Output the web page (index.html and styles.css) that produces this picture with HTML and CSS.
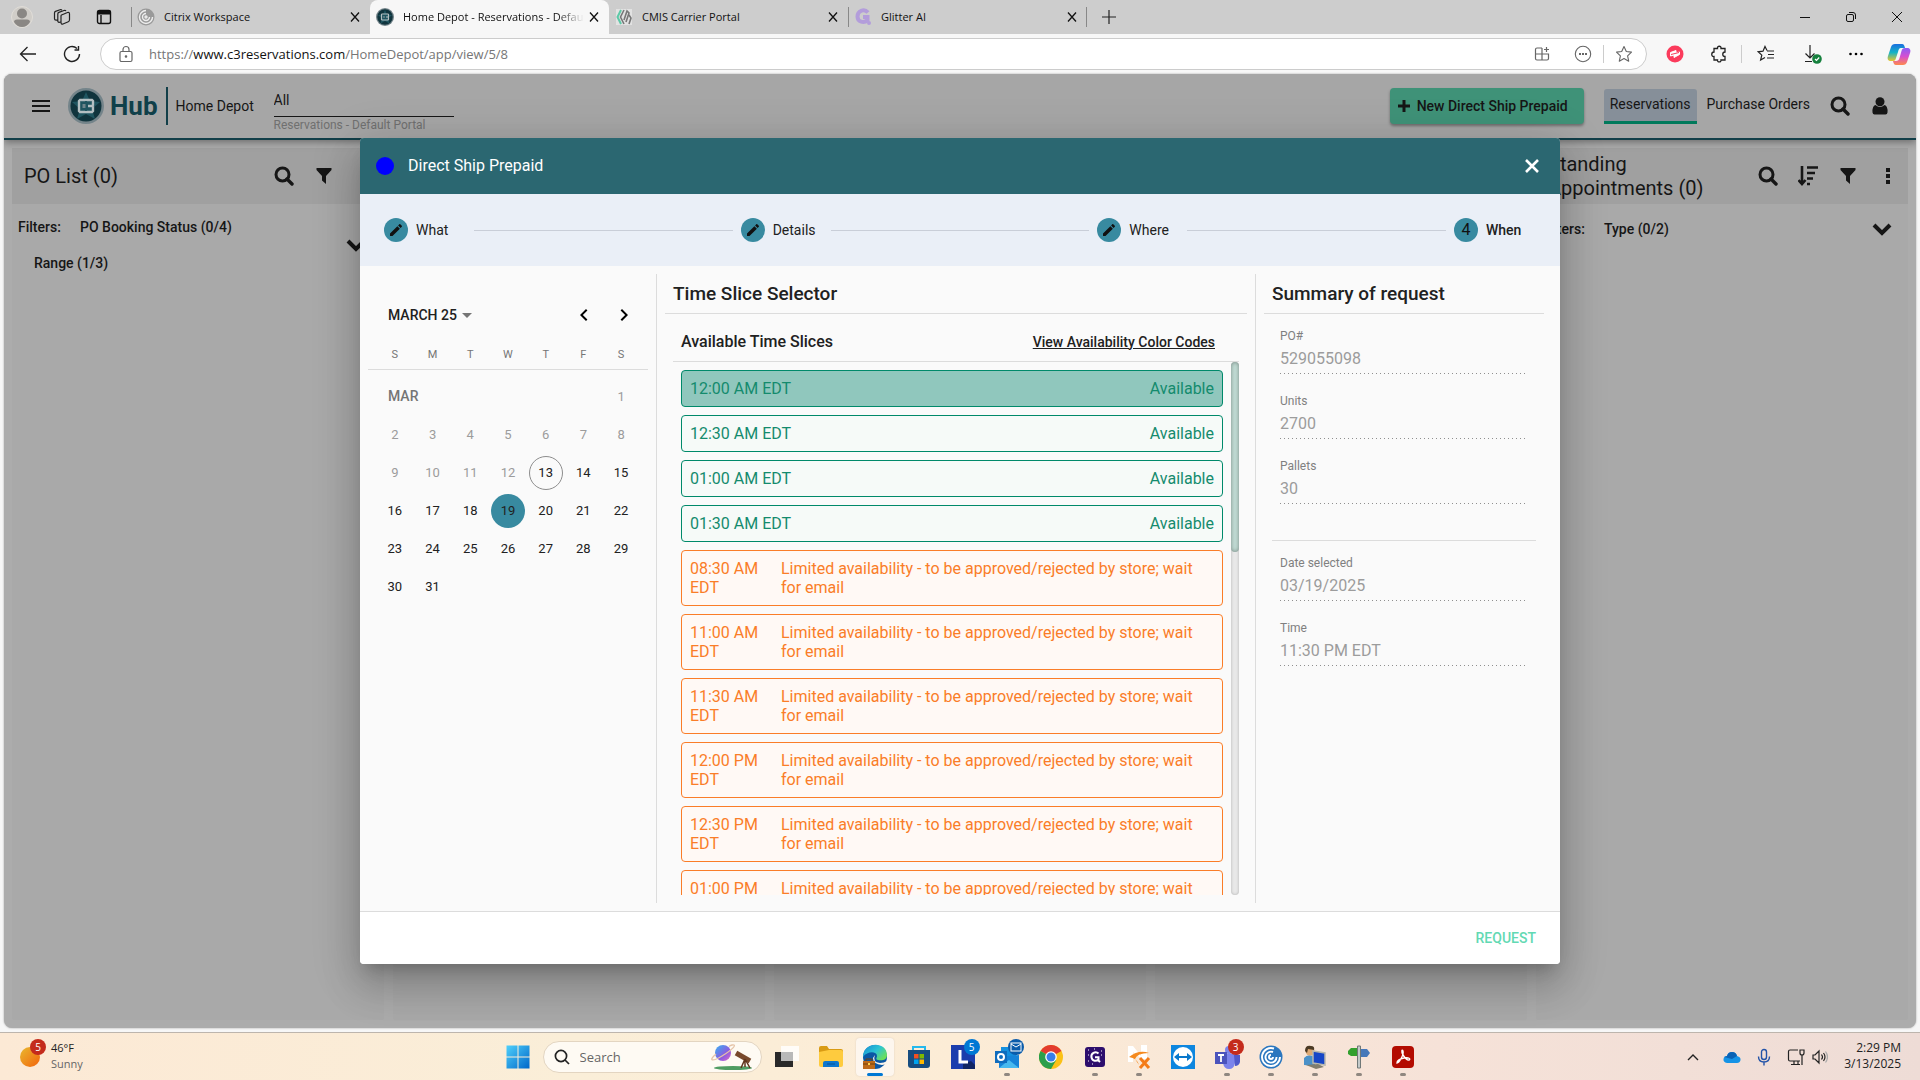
FILE: index.html
```html
<!DOCTYPE html>
<html lang="en">
<head>
<meta charset="utf-8">
<title>Home Depot - Reservations - Default Portal</title>
<link rel="stylesheet" href="styles.css">
</head>
<body>
<svg width="0" height="0" class="defs" aria-hidden="true">
  <symbol id="x" viewBox="0 0 12 12"><path d="M2 1.500l8 9M10 1.500l-8 9" fill="none" stroke="currentColor" stroke-width="1.300"/></symbol>
  <symbol id="search" viewBox="0 0 20 20"><circle cx="8.500" cy="8.500" r="6.500" fill="none" stroke="currentColor" stroke-width="3"/><path d="M13 13l5 5" stroke="currentColor" stroke-width="3.400" stroke-linecap="round"/></symbol>
  <symbol id="filter" viewBox="0 0 16 18"><path d="M.5 1h15v2L10 9v8l-4-3.500V9L.5 3z" fill="currentColor"/></symbol>
  <symbol id="down" viewBox="0 0 20 14"><path d="M2 3l8 8 8-8" fill="none" stroke="currentColor" stroke-width="4"/></symbol>
  <symbol id="pencil" viewBox="0 0 24 24"><path fill="currentColor" d="M3 17.250V21h3.750L17.810 9.940l-3.750-3.750L3 17.250zM20.710 7.040c.39-.39.39-1.020 0-1.410l-2.340-2.340c-.39-.39-1.020-.39-1.410 0l-1.830 1.830 3.750 3.750 1.830-1.830z"/></symbol>
  <symbol id="c3" viewBox="0 0 36 36"><circle cx="18" cy="18" r="18" fill="#74848a"/><circle cx="18" cy="18" r="15.500" fill="#10343d"/><path d="M18 4l4 9 10 1-8 7 3 10-9-5-9 5 3-10-8-7 10-1z" fill="#1f5560"/><path d="M17 13v-1h-5l-1 1v10l1 1h5v-1M19 13v-1h5l1 1v4l-1 1 1 1v4l-1 1h-5v-1M20 18h4" fill="none" stroke="#b4bfc2" stroke-width="2.400"/><path d="M14.500 16h3v4h-3z" fill="#6f868c"/></symbol>
</svg>

<header class="browser">
  <nav class="tabs" aria-label="Browser tabs">
    <div class="tab-tools">
      <svg width="22" height="22" viewBox="0 0 22 22"><circle cx="11" cy="11" r="10.500" fill="#d0cdc8" stroke="#e0ddd8"/><circle cx="11" cy="7.500" r="5" fill="#8a8784"/><path d="M3 16q0-2.500 3-2.500h10q3 0 3 2.500-3 5-8 5t-8-5z" fill="#8a8784"/></svg>
      <svg width="18" height="18" viewBox="0 0 18 18" fill="none" stroke="#222" stroke-width="1.200" stroke-linejoin="round"><path d="M8.500 7l6-2.500q1.800-.5 2 1.300v6q0 1.500-1.200 2L10 16q-1.800.6-2-1.200V8q0-.8.500-1z"/><path d="M8 14l-2 .3q-1.200 0-1.200-1.400V6q0-1.200 1-1.600L11 2.500q1.300-.5 2 .5M5 12l-2 .2q-1.500 0-1.500-1.400V5q0-1.200 1-1.600L7 1.700q1-.4 2 .3"/></svg>
      <svg width="16" height="16" viewBox="0 0 16 16" fill="none" stroke="#111" stroke-width="1.400"><rect x="1.500" y="1.500" width="13" height="13" rx="2"/><path d="M1.500 3.500h13" stroke-width="4"/><path d="M5 6v8"/></svg>
    </div>
    <div class="tab line-left"><svg width="18" height="18" viewBox="0 0 18 18" fill="none" stroke="#eee" stroke-width="1.400"><circle cx="9" cy="9" r="8.500" fill="#999" stroke="none"/><path d="M9 2.500a6.500 6.500 0 1 0 6.500 6.500M9 5.500A3.500 3.500 0 1 0 12.500 9M9 9"/><circle cx="9" cy="9" r="1"/></svg><span>Citrix Workspace</span><button aria-label="Close tab"><svg width="12" height="12"><use href="#x"/></svg></button></div>
    <div class="tab active"><svg width="18" height="18"><use href="#c3"/></svg><span>Home Depot - Reservations - Default Portal</span><button aria-label="Close tab"><svg width="12" height="12"><use href="#x"/></svg></button></div>
    <div class="tab"><svg width="18" height="18" viewBox="0 0 18 18" fill="none"><path fill="#e2e2e2" d="M1 1h16v16H1z"/><path d="M6 2L2.500 9 6 16" stroke="#5cc9a7" stroke-width="2"/><path d="M9 2L5.500 9 9 16M9 12l3-9 2 2-3 9M14 7l2 3-2 6" stroke="#777" stroke-width="1.600"/></svg><span>CMIS Carrier Portal</span><button aria-label="Close tab"><svg width="12" height="12"><use href="#x"/></svg></button></div>
    <div class="tab line-left line-right"><svg width="18" height="18" viewBox="0 0 18 18" fill="none" stroke="#b39ddb" stroke-width="4"><path d="M14 4.500C10 0 3.500 3 3.500 8.500S10 15.500 13.500 12V9H9"/><circle cx="15" cy="15" r="1" stroke-width="2"/></svg><span>Glitter AI</span><button aria-label="Close tab"><svg width="12" height="12"><use href="#x"/></svg></button></div>
    <button class="new-tab" aria-label="New tab"><svg width="16" height="16" viewBox="0 0 16 16" stroke="#222" stroke-width="1.200"><path d="M8 1v14M1 8h14"/></svg></button>
    <div class="window-controls">
      <button aria-label="Minimize"><svg width="12" height="12" viewBox="0 0 12 12" stroke="#111"><path d="M1 6.500h10"/></svg></button>
      <button aria-label="Restore"><svg width="12" height="12" viewBox="0 0 12 12" fill="none" stroke="#111"><rect x="1.500" y="3.500" width="7" height="7" rx="1.500"/><path d="M4 1.500h4q2.500 0 2.500 2.500v4"/></svg></button>
      <button aria-label="Close"><svg width="12" height="12" viewBox="0 0 12 12" stroke="#111"><path d="M1 1l10 10M11 1L1 11"/></svg></button>
    </div>
  </nav>
  <div class="toolbar">
    <button class="tool" aria-label="Back"><svg width="18" height="18" viewBox="0 0 18 18" fill="none" stroke="#222" stroke-width="1.300"><path d="M17 9H1.500M8.500 2l-7 7 7 7"/></svg></button>
    <button class="tool" aria-label="Refresh"><svg width="18" height="18" viewBox="0 0 18 18" fill="none" stroke="#222" stroke-width="1.400"><path d="M16.500 9a7.500 7.500 0 1 1-2.500-5.600M15.500 1v4h-4"/></svg></button>
    <div class="address">
      <svg width="16" height="18" viewBox="0 0 16 18" fill="none" stroke="#666" stroke-width="1.200"><rect x="2" y="6.500" width="12" height="10" rx="1.500"/><path d="M5 6V4.500a3 3 0 0 1 6 0V6"/><circle cx="8" cy="11.500" r=".7" fill="#666"/></svg>
      <span class="url">https://<b>www.c3reservations.com</b>/HomeDepot/app/view/5/8</span>
      <button class="tool" aria-label="Install app"><svg width="16" height="16" viewBox="0 0 16 16" fill="none" stroke="#666" stroke-width="1.200"><path d="M8 2H3q-1.500 0-1.500 1.500v9Q1.500 14 3 14h10q1.500 0 1.500-1.500V8h-13M8 2v12M12.500 1v5M10 3.500h5"/></svg></button>
      <button class="tool" aria-label="Page actions"><svg width="18" height="18" viewBox="0 0 18 18" fill="none" stroke="#666" stroke-width="1.100"><circle cx="9" cy="9" r="7.700"/><path d="M5 9h2M8 9h2M11 9h2" stroke-width="1.800"/></svg></button>
      <button class="tool line-left" aria-label="Add to favorites"><svg width="18" height="18" viewBox="0 0 18 18" fill="none" stroke="#666" stroke-width="1.100" stroke-linejoin="round"><path d="M9 1.500l2.300 5 5.200.6-3.900 3.700 1.100 5.400L9 13.500l-4.700 2.700 1.100-5.400L1.500 7.100l5.200-.6z"/></svg></button>
    </div>
    <div class="extensions">
      <button class="tool" aria-label="Extension"><svg width="18" height="18" viewBox="0 0 18 18"><circle cx="9" cy="9" r="8.500" fill="#fb3b5c"/><path d="M4.500 7.500l5.500-2v2.500l3.500-1v2.500l-5.500 3V10l-3.500 1z" fill="#fff" stroke="#fff" stroke-linejoin="round"/><path d="M5 9.500l8-2" stroke="#fb3b5c"/></svg></button>
      <button class="tool" aria-label="Extensions"><svg width="18" height="18" viewBox="0 0 18 18" fill="none" stroke="#222" stroke-width="1.300"><path d="M4 3.500h3.500c-.5-3 4-3 3.500 0h4V7c-3 0-3 4.500 0 4.500V15h-4c.5 2.500-4 2.500-3.500 0H4v-3.500C1 12 1 7 4 7z"/></svg></button>
      <button class="tool wide line-left" aria-label="Favorites"><svg width="18" height="18" viewBox="0 0 18 18" fill="none" stroke="#222" stroke-width="1.200"><path d="M10 5.500L8 1.500l-2 4.700-4.800.6 3.600 3.300L3.600 15 8 12.500M10 6h7M11 9.500h6M10 13h7"/></svg></button>
      <button class="tool" aria-label="Downloads"><svg width="20" height="20" viewBox="0 0 20 20" fill="none" stroke="#222" stroke-width="1.200"><path d="M8 1v13M3.500 9.500L8 14l4.500-4.500M3 17.500h7"/><circle cx="15" cy="15" r="4.800" fill="#15803d" stroke="none"/><path d="M13 15l1.500 1.500 2.700-3" stroke="#fff"/></svg></button>
      <button class="tool" aria-label="Settings and more"><svg width="16" height="16" viewBox="0 0 16 16"><circle cx="2.500" cy="8" r="1.300"/><circle cx="8" cy="8" r="1.300"/><circle cx="13.500" cy="8" r="1.300"/></svg></button>
      <button class="tool" aria-label="Copilot"><svg width="24" height="24" viewBox="0 0 24 24"><defs><linearGradient id="ca" x2="0" y2="1"><stop stop-color="#1a6fe0"/><stop offset=".5" stop-color="#15b3c5"/><stop offset="1" stop-color="#e8c62c"/></linearGradient><linearGradient id="cb" x2="0" y2="1"><stop stop-color="#8b5cf6"/><stop offset=".5" stop-color="#d64fd0"/><stop offset="1" stop-color="#ff8a4c"/></linearGradient></defs><path d="M8 2h7c2 0 2.500 2 3 4h-4c-2 0-2.500 2-3 4l-2 6c-.5 2-1 3-3 3H4c-3 0-4-2-3-5l3-9c.6-2 2-3 4-3z" fill="url(#ca)"/><path d="M16 23H9c-2 0-2.500-2-3-4h3c2 0 3-1 3.500-3l2-7c.5-2 1.500-3 3.500-3h2c3 0 4 2 3 5l-3 9c-.6 2-2 3-4 3z" fill="url(#cb)"/></svg></button>
    </div>
  </div>
</header>

<div class="page">
  <header class="app-bar">
    <button class="icon menu" aria-label="Menu"><svg width="18" height="14" viewBox="0 0 18 14" stroke="currentColor" stroke-width="2"><path d="M0 2h18M0 7h18M0 12h18"/></svg></button>
    <a class="brand" href="#"><svg width="36" height="36"><use href="#c3"/></svg><span>Hub</span></a>
    <span class="customer">Home Depot</span>
    <div class="portal"><input id="portal" value="All"><label for="portal">Reservations - Default Portal</label></div>
    <button class="create"><svg width="12" height="12" viewBox="0 0 12 12" stroke="currentColor" stroke-width="3"><path d="M6 0v12M0 6h12"/></svg>New Direct Ship Prepaid</button>
    <nav class="links"><a class="current" href="#">Reservations</a><a href="#">Purchase Orders</a></nav>
    <button class="icon" aria-label="Search"><svg width="20" height="20"><use href="#search"/></svg></button>
    <button class="icon user" aria-label="Account"><svg width="16" height="18" viewBox="0 0 16 18" fill="currentColor"><circle cx="8" cy="4.800" r="4.500"/><path d="M3.500 8Q0 9 .5 15.500q.3 2 2 2h11q1.700 0 2-2Q16 9 12.500 8q-4.500 4-9 0z"/></svg></button>
  </header>

  <main class="board">
    <section class="column">
      <header><h2>PO List (0)</h2><button class="icon" aria-label="Search list"><svg width="20" height="20"><use href="#search"/></svg></button><button class="icon" aria-label="Filter list"><svg width="16" height="18"><use href="#filter"/></svg></button><span class="spacer"></span></header>
      <div class="filters"><div class="filter-list"><span>Filters:</span><span>PO Booking Status (0/4)</span><span class="second">Range (1/3)</span></div><button class="icon" aria-label="Expand filters"><svg width="20" height="14"><use href="#down"/></svg></button></div>
    </section>
    <section class="column"></section>
    <section class="column"></section>
    <section class="column"></section>
    <section class="column">
      <header><h2>Standing Appointments (0)</h2><button class="icon" aria-label="Search appointments"><svg width="20" height="20"><use href="#search"/></svg></button><button class="icon" aria-label="Sort"><svg width="20" height="20" viewBox="0 0 20 20" fill="none" stroke="currentColor" stroke-width="2.600"><path d="M4 0v17M.5 14L4 18l3.500-4M9 1.500h11M9 7h8M9 12.500h6M9 18h3"/></svg></button><button class="icon" aria-label="Filter appointments"><svg width="16" height="18"><use href="#filter"/></svg></button><button class="icon" aria-label="More"><svg width="6" height="18" viewBox="0 0 6 18" fill="currentColor"><path d="M1 1h4v4H1zM1 7h4v4H1zM1 13h4v4H1z"/></svg></button></header>
      <div class="filters single"><div class="filter-list"><span>Filters:</span><span>Type (0/2)</span></div><button class="icon" aria-label="Expand filters"><svg width="20" height="14"><use href="#down"/></svg></button></div>
    </section>
  </main>

  <div class="overlay">
    <div class="dialog" role="dialog" aria-labelledby="dialog-title">
      <header class="dialog-bar"><i class="dot"></i><h1 id="dialog-title">Direct Ship Prepaid</h1><button aria-label="Close dialog"><svg width="16" height="16" viewBox="0 0 16 16" stroke="#fff" stroke-width="2.600"><path d="M2 2l12 12M14 2L2 14"/></svg></button></header>
      <ol class="stepper">
        <li><i><svg width="16" height="16"><use href="#pencil"/></svg></i><span>What</span></li>
        <li><i><svg width="16" height="16"><use href="#pencil"/></svg></i><span>Details</span></li>
        <li><i><svg width="16" height="16"><use href="#pencil"/></svg></i><span>Where</span></li>
        <li class="current"><i>4</i><span>When</span></li>
      </ol>
      <div class="dialog-body">
        <section class="calendar">
          <div class="calendar-controls"><button class="period">MARCH 25<svg width="10" height="5" viewBox="0 0 10 5" fill="#757575"><path d="M0 0h10L5 5z"/></svg></button><button class="step" aria-label="Previous month"><svg width="24" height="24" viewBox="0 0 24 24"><path d="M15.410 7.410L14 6l-6 6 6 6 1.410-1.410L10.830 12z"/></svg></button><button class="step" aria-label="Next month"><svg width="24" height="24" viewBox="0 0 24 24"><path d="M8.590 16.590L10 18l6-6-6-6-1.410 1.410L13.170 12z"/></svg></button></div>
          <table>
            <thead><tr><th>S</th><th>M</th><th>T</th><th>W</th><th>T</th><th>F</th><th>S</th></tr></thead>
            <tbody>
              <tr><td class="month" colspan="6">MAR</td><td><button disabled>1</button></td></tr>
              <tr><td><button disabled>2</button></td><td><button disabled>3</button></td><td><button disabled>4</button></td><td><button disabled>5</button></td><td><button disabled>6</button></td><td><button disabled>7</button></td><td><button disabled>8</button></td></tr>
              <tr><td><button disabled>9</button></td><td><button disabled>10</button></td><td><button disabled>11</button></td><td><button disabled>12</button></td><td><button class="today">13</button></td><td><button>14</button></td><td><button>15</button></td></tr>
              <tr><td><button>16</button></td><td><button>17</button></td><td><button>18</button></td><td><button class="selected">19</button></td><td><button>20</button></td><td><button>21</button></td><td><button>22</button></td></tr>
              <tr><td><button>23</button></td><td><button>24</button></td><td><button>25</button></td><td><button>26</button></td><td><button>27</button></td><td><button>28</button></td><td><button>29</button></td></tr>
              <tr><td><button>30</button></td><td><button>31</button></td></tr>
            </tbody>
          </table>
        </section>
        <section class="selector">
          <h2>Time Slice Selector</h2>
          <div class="slices">
            <div class="slices-head"><h3>Available Time Slices</h3><a href="#">View Availability Color Codes</a></div>
            <div class="scroller">
              <div class="slots">
                <button class="slot chosen"><span>12:00 AM EDT</span><span>Available</span></button>
                <button class="slot"><span>12:30 AM EDT</span><span>Available</span></button>
                <button class="slot"><span>01:00 AM EDT</span><span>Available</span></button>
                <button class="slot"><span>01:30 AM EDT</span><span>Available</span></button>
                <button class="slot limited"><span>08:30 AM EDT</span><span>Limited availability - to be approved/rejected by store; wait for email</span></button>
                <button class="slot limited"><span>11:00 AM EDT</span><span>Limited availability - to be approved/rejected by store; wait for email</span></button>
                <button class="slot limited"><span>11:30 AM EDT</span><span>Limited availability - to be approved/rejected by store; wait for email</span></button>
                <button class="slot limited"><span>12:00 PM EDT</span><span>Limited availability - to be approved/rejected by store; wait for email</span></button>
                <button class="slot limited"><span>12:30 PM EDT</span><span>Limited availability - to be approved/rejected by store; wait for email</span></button>
                <button class="slot limited"><span>01:00 PM EDT</span><span>Limited availability - to be approved/rejected by store; wait for email</span></button>
              </div>
              <div class="track"><div class="thumb"></div></div>
            </div>
          </div>
        </section>
        <section class="summary">
          <h2>Summary of request</h2>
          <div class="fields">
            <div class="field"><label for="po">PO#</label><input id="po" value="529055098" disabled></div>
            <div class="field"><label for="units">Units</label><input id="units" value="2700" disabled></div>
            <div class="field"><label for="pallets">Pallets</label><input id="pallets" value="30" disabled></div>
          </div>
          <div class="fields when">
            <div class="field"><label for="date">Date selected</label><input id="date" value="03/19/2025" disabled></div>
            <div class="field"><label for="time">Time</label><input id="time" value="11:30 PM EDT" disabled></div>
          </div>
        </section>
      </div>
      <footer class="dialog-actions"><button>REQUEST</button></footer>
    </div>
  </div>
</div>

<footer class="taskbar">
  <div class="weather"><span class="app"><svg width="20" height="20" viewBox="0 0 20 20"><defs><linearGradient id="sun" x2="1" y2="1"><stop stop-color="#e9b92f"/><stop offset="1" stop-color="#f2640c"/></linearGradient></defs><circle cx="10" cy="10" r="10" fill="url(#sun)"/></svg><b class="badge red">5</b></span><p>46°F<br><small>Sunny</small></p></div>
  <nav class="apps" aria-label="Taskbar">
    <button class="app" aria-label="Start"><svg width="24" height="24" viewBox="0 0 24 24"><defs><linearGradient id="win" x2="1" y2="1"><stop stop-color="#4fd0fb"/><stop offset="1" stop-color="#0067c9"/></linearGradient></defs><path d="M.5.500h11v11H.5zM12.500.500h11v11h-11zM.5 12.500h11v11H.5zM12.500 12.500h11v11h-11z" fill="url(#win)"/></svg></button>
    <label class="search"><svg width="16" height="16" viewBox="0 0 16 16" fill="none" stroke="#222" stroke-width="1.700"><circle cx="7" cy="7" r="5.600"/><path d="M11 11l4 4"/></svg><input placeholder="Search" aria-label="Search"><svg width="42" height="26" viewBox="0 0 42 26"><defs><linearGradient id="planet" x2="1" y2="1"><stop stop-color="#36b3f2"/><stop offset=".6" stop-color="#8b5be0"/><stop offset="1" stop-color="#e06bc8"/></linearGradient></defs><ellipse cx="22" cy="24" rx="19" ry="2" fill="#4f9c62"/><circle cx="12" cy="9" r="8" fill="url(#planet)"/><path d="M5 10c-8 7-4 8 6 2s16-12 10-11q-2 .5-3 1.500" fill="none" stroke="#e5c4a8" stroke-width="1.300"/><path d="M25 9l14 8" stroke="#78492c" stroke-width="5"/><path d="M34 15l-4 9M34 15l5 9M34 15v8" stroke="#60351d" stroke-width="1.500"/></svg></label>
    <button class="app" aria-label="Task view"><svg width="24" height="24" viewBox="0 0 24 24"><path d="M0 7h18v15H0z" fill="#292929"/><path d="M6 1h18v15H6z" fill="#fff" opacity=".82"/><path d="M6 7h12v9H6z" fill="#b9b9b9"/></svg></button>
    <button class="app" aria-label="File Explorer"><svg width="24" height="24" viewBox="0 0 24 24"><path d="M0 3q0-2 2-2h6l2 3h12q2 0 2 2v3H0z" fill="#d99b13"/><path d="M0 7l10-2h12q2 0 2 2v13q0 2-2 2H2q-2 0-2-2z" fill="#fecb3e"/><path d="M4 22v-4q0-2 2-2h12q2 0 2 2v4z" fill="#0c77cf"/><path d="M8 19h8" stroke="#095396"/></svg></button>
    <button class="app open active" aria-label="Edge"><svg width="26" height="26" viewBox="0 0 26 26"><defs><linearGradient id="edge" y2=".7"><stop stop-color="#1689d5"/><stop offset=".55" stop-color="#2cc4d4"/><stop offset="1" stop-color="#6ee055"/></linearGradient></defs><circle cx="13" cy="13" r="12" fill="#0b57a4"/><path d="M1 13C1-3 25-3 25 11c0 5-5 6-9 5-3-1-1-2-1-4 0-5-10-5-14 1z" fill="url(#edge)"/><path d="M13 11q-3 7 5 8 4 0 7-2v3l-5 1q-9-1-9-7z" fill="#fbf4ea"/><path d="M1 17h12v8H1z" fill="#bd6a19"/><path d="M4 17v-2h6v2M1 20h12" stroke="#75400b" fill="none"/><path d="M6 19h2v2H6z" fill="#ffd34f"/></svg></button>
    <button class="app" aria-label="Store"><svg width="24" height="24" viewBox="0 0 24 24"><path d="M6 6V2h12v4" fill="none" stroke="#25b9ed" stroke-width="2"/><path d="M1 5h22v15q0 3-3 3H4q-3 0-3-3z" fill="#174d80"/><path d="M7 9h4.500v4.500H7z" fill="#f25022"/><path d="M12.500 9H17v4.500h-4.500z" fill="#7fba00"/><path d="M7 14.500h4.500V19H7z" fill="#00a4ef"/><path d="M12.500 14.500H17V19h-4.500z" fill="#ffb900"/></svg></button>
    <button class="app" aria-label="L app"><svg width="24" height="24" viewBox="0 0 24 24"><path d="M0 0h24v24H0z" fill="#1b3dad"/><path d="M12 19l8-3 4 4v4H12z" fill="#102564"/><path d="M9 5v12h8" fill="none" stroke="#fff" stroke-width="3"/></svg><b class="badge blue">5</b></button>
    <button class="app open" aria-label="Outlook"><svg width="26" height="24" viewBox="0 0 26 24"><path d="M7 2h15v13H7z" fill="#1490df"/><path d="M5 12l20-2v13H5z" fill="#1683d8"/><path d="M5 23l10-8 10 8z" fill="#48b9ef"/><path d="M1 6h12v12H1z" fill="#0f6cbd"/><circle cx="7" cy="12" r="3" fill="none" stroke="#fff" stroke-width="2"/></svg><b class="badge mail"><svg width="12" height="10" viewBox="0 0 12 10" fill="none" stroke="#fff"><rect x="1" y="1" width="10" height="8"/><path d="M1 2l5 3 5-3"/></svg></b></button>
    <button class="app" aria-label="Chrome"><svg width="24" height="24" viewBox="0 0 24 24"><circle cx="12" cy="12" r="12" fill="#fbc116"/><path d="M12 12L1.600 6A12 12 0 0 1 22.400 6z" fill="#e33b2e"/><path d="M12 12l5.200 3L12 24A12 12 0 0 1 1.600 6z" fill="#2a9f4b"/><circle cx="12" cy="12" r="5.800" fill="#fff"/><circle cx="12" cy="12" r="4.500" fill="#397de8"/></svg></button>
    <button class="app open" aria-label="Glitter AI"><svg width="20" height="20" viewBox="0 0 20 20"><rect width="20" height="20" rx="3" fill="#2d0e6d"/><path d="M13.500 6.500c-3-3-8 0-7 4s5 4 7 2v-2.300H10M13 13l2 2" fill="none" stroke="#fff" stroke-width="2"/><path d="M3 3h1M9 2h1M16 4h1M3 8h1M3 14h1M7 17h1M16 8h1" stroke="#fff"/></svg></button>
    <button class="app open" aria-label="NX"><svg width="24" height="24" viewBox="0 0 24 24"><path d="M1 17V1h5l8 10V0h6v14h-5L6 7v10z" fill="#fff"/><path d="M2 12Q12 4 22 8 10 8 8 14q2 3 4 6-2-7-10-8z" fill="#f58a1f"/><path d="M13 13l9 10M22 13l-9 10" stroke="#f47b17" stroke-width="3"/></svg></button>
    <button class="app" aria-label="TeamViewer"><svg width="24" height="24" viewBox="0 0 24 24"><path d="M0 0h24v24H0z" fill="#0d86df"/><circle cx="12" cy="12" r="10" fill="#fff"/><path d="M3 12l5-4v3h8V8l5 4-5 4v-3H8v3z" fill="#0878cc"/></svg></button>
    <button class="app open" aria-label="Teams"><svg width="26" height="24" viewBox="0 0 26 24"><circle cx="15" cy="5" r="4" fill="#7b83eb"/><circle cx="22" cy="7" r="3" fill="#5059c9"/><path d="M9 9h12v9q-1 6-6 6t-6-6z" fill="#7b83eb"/><path d="M20 10h6v7q-1 4-5 4z" fill="#5059c9"/><path d="M1 7h12v12H1z" fill="#4b53bc"/><path d="M4 10h6M7 10v7" stroke="#fff" stroke-width="1.800"/></svg><b class="badge red">3</b></button>
    <button class="app open" aria-label="Citrix"><svg width="24" height="24" viewBox="0 0 24 24"><circle cx="12" cy="12" r="11.500" fill="#2a76bf"/><path d="M15 3.500A9 9 0 1 0 21 12M14 7a5.500 5.500 0 1 0 3.500 5M12 10a2 2 0 1 0 2 2" fill="none" stroke="#fff" stroke-width="1.900"/></svg></button>
    <button class="app open" aria-label="Remote support"><svg width="24" height="24" viewBox="0 0 24 24"><path d="M1 20V13q4-5 11-1v9z" fill="#4b91c8"/><circle cx="7" cy="6" r="4.500" fill="#dea973"/><path d="M2 6q0-6 6-5 4 0 3 4l-6-1-1 4z" fill="#4b3a24"/><path d="M10 6l12 2v12l-12-2z" fill="#1746c7" stroke="#b7b7ad" stroke-width="1.500"/><path d="M3 20l12-1 6 3-8 2z" fill="#817d6d"/></svg></button>
    <button class="app open" aria-label="Signpost"><svg width="24" height="24" viewBox="0 0 24 24"><path d="M1 6l3-3h6v8H4L1 9z" fill="#33a02e"/><path d="M13 4h7l3 4-3 4h-7z" fill="#4678b9"/><path d="M10.500 1h3v22h-3z" fill="#c3c9c9" stroke="#707878"/></svg></button>
    <button class="app open" aria-label="Acrobat"><svg width="22" height="22" viewBox="0 0 22 22"><rect width="22" height="22" rx="4" fill="#b30b00"/><path d="M5 17c2 0 7-8 6-12-1-2-2 0 0 4 2 3 4 6 6 5s0-3-5-2-7 3-7 5z" fill="none" stroke="#fff" stroke-width="1.400"/></svg></button>
  </nav>
  <div class="tray">
    <svg width="16" height="16" viewBox="0 0 16 16" fill="none" stroke="#222" stroke-width="1.400"><path d="M3 11l5-5 5 5"/></svg>
    <svg width="18" height="18" viewBox="0 0 18 18"><path d="M4 15q-4-1-3.500-4T4 8q1-4 5-4t5 4q4 1 3.500 4T14 15z" fill="#1593e6"/><path d="M1 9l3-1q1-4 5-4t5 4L9 11z" fill="#0a62b5"/></svg>
    <svg width="14" height="18" viewBox="0 0 14 18" fill="none" stroke="#2353a8" stroke-width="1.400"><rect x="4.500" y="1.500" width="5" height="10" rx="2.500"/><path d="M1.500 8.500q0 5.500 5.500 5.500t5.500-5.500M7 14v3.500"/></svg>
    <span class="pair"><svg width="18" height="18" viewBox="0 0 18 18" fill="none" stroke="#222" stroke-width="1.200"><path d="M11 2H3Q1.500 2 1.500 3.500v8Q1.500 13 3 13h10M7 13v3M11 13v3M4 16.500h9M15 7v10M13 2h4v3q0 2-2 2t-2-2z"/></svg><svg width="16" height="18" viewBox="0 0 16 18" fill="none" stroke="#222" stroke-width="1.200"><path d="M1 7h2l4-4v12l-4-4H1zM9.500 6.500q2 2.500 0 5M11.500 5q3 4 0 8"/><path d="M13.500 3.500q4 5.500 0 11" stroke="#aaa"/></svg></span>
    <p>2:29 PM<br>3/13/2025</p>
  </div>
</footer>
</body>
</html>
```

FILE: styles.css
```css
* { box-sizing: border-box; }
body {
  margin: 0;
  height: 100vh;
  display: flex;
  flex-direction: column;
  overflow: hidden;
  background: #f7f7f7;
  color: #212121;
  font: 14px/16px Roboto, sans-serif;
}
button, input { font: inherit; color: inherit; border: 0; background: none; padding: 0; margin: 0; }
button { display: flex; align-items: center; justify-content: center; cursor: pointer; }
a { color: inherit; text-decoration: none; }
h1, h2, h3, p, ol { margin: 0; padding: 0; }
svg { display: block; flex: none; }
.defs { position: absolute; }

/* Browser frame */
.browser { font-family: "Open Sans", sans-serif; flex: none; }
.tabs { display: flex; height: 34px; background: #cdcdcd; font-size: 11px; color: #111; }
.tab-tools { width: 131px; display: flex; align-items: center; padding-left: 11px; gap: 20px; }
.tab-tools svg:last-child { margin-left: 5px; }
.tab { position: relative; width: 239px; display: flex; align-items: center; padding: 0 9px 0 6px; }
.tab span { flex: 1; margin-left: 9px; white-space: nowrap; overflow: hidden; }
.tab.active { background: #f7f7f7; border-radius: 8px 8px 0 0; }
.tab.active span { margin-right: 4px; -webkit-mask-image: linear-gradient(90deg, #000 85%, transparent); mask-image: linear-gradient(90deg, #000 85%, transparent); }
.line-left, .line-right { position: relative; }
.line-left::before, .line-right::after { content: ""; position: absolute; left: 0; top: 7px; bottom: 7px; width: 1px; background: #888; }
.line-right::after { left: auto; right: 0; }
.new-tab { width: 44px; }
.window-controls { display: flex; margin-left: auto; }
.window-controls button { width: 46px; }
.toolbar { height: 40px; display: flex; align-items: center; padding: 0 0 0 6px; }
.tool { width: 44px; height: 32px; }
.tool.wide { width: 49px; }
.toolbar .line-left::before { background: #ccc; }
.address { flex: 1; height: 32px; margin-left: 6px; display: flex; align-items: center; background: #fff; border: 1px solid #ccc; border-radius: 16px; padding: 0 2px 0 17px; }
.address .tool { width: 41px; }
.url { flex: 1; margin-left: 15px; font-size: 13px; color: #767676; }
.url b { font-weight: 400; color: #111; }
.extensions { display: flex; margin-left: 6px; }
.extensions .tool:last-child { width: 42px; }

/* Application shell */
.page { position: relative; flex: 1; min-height: 0; margin: 0 4px 4px; display: flex; flex-direction: column; background: #acacac; border-radius: 8px; overflow: hidden; box-shadow: 0 0 2px #999; color: #161616; }
.app-bar { flex: none; height: 66px; display: flex; align-items: center; padding: 0 26px 0 27px; background: #a6a6a6; border-bottom: 2px solid #123f49; box-shadow: 0 2px 8px rgba(0,0,0,.4); z-index: 1; }
.brand { display: flex; align-items: center; gap: 6px; margin-left: 17px; padding-right: 8px; height: 38px; border-right: 2px solid #123f49; color: #10404a; font-size: 26px; font-weight: 700; }
.customer { margin-left: 8px; width: 98px; }
.portal { width: 180px; display: flex; flex-direction: column; padding-top: 10px; }
.portal input { width: 100%; height: 28px; border-bottom: 1px solid #161616; padding-bottom: 6px; }
.portal label { font-size: 12px; color: #707070; }
.create { height: 36px; margin-left: auto; padding: 0 16px 0 8px; gap: 7px; border-radius: 4px; background: #3f9278; box-shadow: 0 2px 3px rgba(0,0,0,.35); font-weight: 500; }
.links { display: flex; margin: 0 10px 0 20px; }
.links a { height: 35px; padding: 7px 6px 0; margin-right: 4px; border-bottom: 3px solid transparent; }
.links .current { background: #868f99; border-color: #00795b; border-radius: 3px 3px 0 0; }
.icon { min-width: 20px; }
.user { margin-left: 20px; }

.board { flex: 1; display: grid; grid-template-columns: repeat(5, 1fr); gap: 9px; padding: 8px; }
.column { background: #a9a9a9; border-radius: 2px; }
.column > header { height: 56px; display: flex; align-items: center; padding: 0 0 0 12px; background: #a0a0a0; }
.column h2 { flex: 1; font-size: 20px; line-height: 24px; font-weight: 400; }
.column header .icon { width: 40px; }
.spacer { width: 40px; }
.filters { display: flex; justify-content: space-between; align-items: center; padding: 14px 18px 0 6px; font-weight: 500; }
.filter-list { display: grid; grid-template-columns: 62px 1fr; row-gap: 18px; line-height: 18px; }
.second { grid-column: 1 / 3; padding-left: 16px; }
.filters.single { padding-top: 16px; padding-right: 16px; }

/* Reservation dialog */
.overlay { position: absolute; inset: 0; display: flex; justify-content: center; align-items: center; z-index: 2; }
.dialog { width: 1200px; max-width: 96%; height: calc(100% - 128px); display: flex; flex-direction: column; background: #fafafa; border-radius: 4px; overflow: hidden; color: #212121; box-shadow: 0 11px 15px -7px rgba(0,0,0,.2), 0 24px 38px 3px rgba(0,0,0,.14), 0 9px 46px 8px rgba(0,0,0,.12); }
.dialog-bar { flex: none; height: 56px; display: flex; align-items: center; padding: 0 20px 0 16px; background: #2b6771; color: #fff; }
.dialog-bar h1 { flex: 1; margin-left: 14px; font-size: 16px; line-height: 20px; font-weight: 400; }
.dot { width: 18px; height: 18px; border-radius: 50%; background: #00f; }
.stepper { flex: none; height: 72px; display: flex; align-items: center; background: #eaeff7; list-style: none; }
.stepper li { display: flex; align-items: center; padding-left: 24px; flex: 1 1 auto; }
.stepper li:not(:last-child)::after { content: ""; flex: 1; height: 1px; margin: 0 -16px 0 8px; background: #c9ced8; }
.stepper li:last-child { flex: none; padding-right: 24px; }
.stepper i { width: 24px; height: 24px; margin-right: 8px; display: flex; align-items: center; justify-content: center; border-radius: 50%; background: #388aa0; color: #111; font-style: normal; }
.stepper span { min-width: 50px; }
.stepper .current { font-weight: 500; }
.stepper .current i { font-size: 16px; font-weight: 400; }
.dialog-body { flex: 1; min-height: 0; display: grid; grid-template-columns: 296px 1fr 304px; padding: 8px 0; }
.dialog-body > section { min-height: 0; }
.dialog-body h2 { height: 40px; padding: 8px; border-bottom: 1px solid #dcdcdc; font-size: 19px; line-height: 24px; font-weight: 500; }

.calendar { padding: 0 8px; }
.calendar-controls { display: flex; align-items: center; height: 40px; margin-top: 21px; padding: 0 4px 0 20px; }
.period { margin-right: auto; gap: 5px; font-weight: 500; }
.step { width: 40px; height: 40px; }
.calendar table { width: 100%; border-spacing: 0; table-layout: fixed; padding: 0 8px; margin-top: 8px; }
.calendar th { position: relative; height: 27px; padding: 0 0 3px; font-size: 11px; font-weight: 400; color: #757575; border-bottom: 1px solid #dcdcdc; }
.calendar th:first-child::before, .calendar th:last-child::before { content: ""; position: absolute; left: -8px; bottom: -1px; width: 8px; height: 1px; background: #dcdcdc; }
.calendar th:last-child::before { left: auto; right: -8px; }
.calendar tbody::before { content: ""; display: block; height: 8px; }
.calendar td { height: 38px; padding: 0; }
.calendar td button { width: 34px; height: 34px; margin: 0 auto; border-radius: 50%; font-size: 13px; }
.calendar td button:disabled { color: #9c9c9c; }
.calendar .month { padding: 0 0 2px 12px; font-weight: 500; color: #757575; }
.calendar .today { border: 1px solid #8d8d8d; }
.calendar .selected { background: #388aa0; }

.selector { display: flex; flex-direction: column; padding: 0 8px; border: solid #dcdcdc; border-width: 0 1px; }
.slices { flex: 1; min-height: 0; display: flex; flex-direction: column; padding: 8px; }
.slices-head { flex: none; height: 40px; display: flex; align-items: center; justify-content: space-between; padding: 0 24px 0 8px; border-bottom: 1px solid #dcdcdc; }
.slices-head h3 { font-size: 16px; font-weight: 500; }
.slices-head a { font-weight: 500; text-decoration: underline; }
.scroller { flex: 1; min-height: 0; display: grid; grid-template-columns: 1fr 8px; overflow: hidden; }
.slots { min-height: 0; padding: 8px; display: flex; flex-direction: column; gap: 8px; overflow: hidden; }
.slot { flex: none; justify-content: space-between; align-items: flex-start; padding: 8px; border: 1px solid #00896a; border-radius: 4px; background: #f6faf8; color: #148b6d; font-size: 16px; line-height: 19px; text-align: left; }
.slot.chosen { background: #90c7bd; color: #148b6d; }
.slot.limited { justify-content: flex-start; border-color: #fa7d28; background: #fff9f5; color: #fa7d28; }
.slot.limited span:first-child { flex: none; width: 91px; }
.track { min-height: 0; border-radius: 4px; background: #e8e8e8; box-shadow: inset 0 0 3px rgba(0,0,0,.25); }
.thumb { height: 190px; border-radius: 4px; background: #c2ddd5; box-shadow: inset 0 0 4px rgba(0,0,0,.4); }

.summary { padding: 0 16px 0 8px; }
.fields { padding: 14px 19px 0 16px; }
.when { margin: 17px 8px 0; padding: 14px 11px 0 8px; border-top: 1px solid #dcdcdc; }
.field { height: 65px; }
.field label { display: block; font-size: 12px; color: #808080; }
.field input { display: block; width: 100%; height: 30px; padding: 2px 0 4px; font-size: 16px; color: #9c9c9c; background: repeating-linear-gradient(90deg, #8f8f8f 0 1px, transparent 1px 4px) bottom / 100% 1px no-repeat; }
.dialog-actions { flex: none; height: 53px; display: flex; align-items: center; justify-content: flex-end; padding: 0 24px; background: #fff; border-top: 1px solid #dcdcdc; }
.dialog-actions button { font-weight: 500; color: #62d9b3; }

/* Taskbar */
.taskbar { flex: none; height: 48px; display: grid; grid-template-columns: 1fr auto 1fr; align-items: center; background: linear-gradient(90deg, #fce9d5, #faeed8 30%, #fcecd6 50%, #f6e2d8 75%, #eedcd6); border-top: 1px solid #bdb5ad; font: 11px/16px "Open Sans", sans-serif; color: #222; }
.weather { display: flex; align-items: center; padding-left: 9px; }
.weather small { font-size: 11px; color: #666; }
.apps { display: flex; align-items: center; }
.app { position: relative; width: 44px; height: 38px; display: flex; align-items: center; justify-content: center; }
.app.open::after { content: ""; position: absolute; bottom: 0; left: 19px; width: 6px; height: 3px; border-radius: 2px; background: #8f8780; }
.app.active { width: 38px; margin: 0 3px; background: #fdf6ee; border-radius: 4px; box-shadow: 0 0 2px #ddcfbf; }
.app.active::after { left: 11px; width: 16px; background: #0078d4; }
.badge { position: absolute; right: 5px; top: 1px; width: 16px; height: 16px; border-radius: 50%; display: flex; align-items: center; justify-content: center; background: #0078d4; color: #fff; font-size: 10px; font-weight: 400; }
.weather .app { width: 42px; }
.badge.red { background: #c42b1c; }
.badge.mail { background: #0b5cab; }
.search { width: 219px; height: 32px; margin: 0 3px; padding: 0 8px 0 10px; display: flex; align-items: center; gap: 10px; background: #fefaf3; border: 1px solid #e3d5c1; border-radius: 16px; }
.search input { flex: 1; min-width: 0; font-size: 13px; }
.search input::placeholder { color: #666; opacity: 1; }
.tray { display: flex; align-items: center; justify-content: flex-end; gap: 16px; padding-right: 19px; text-align: right; font-size: 12px; }
.tray svg:first-child { margin-right: 6px; }
.pair { display: flex; gap: 7px; }
.pair svg:first-child { margin-right: 0; }
.weather p, .tray p { padding-bottom: 2px; }
```
